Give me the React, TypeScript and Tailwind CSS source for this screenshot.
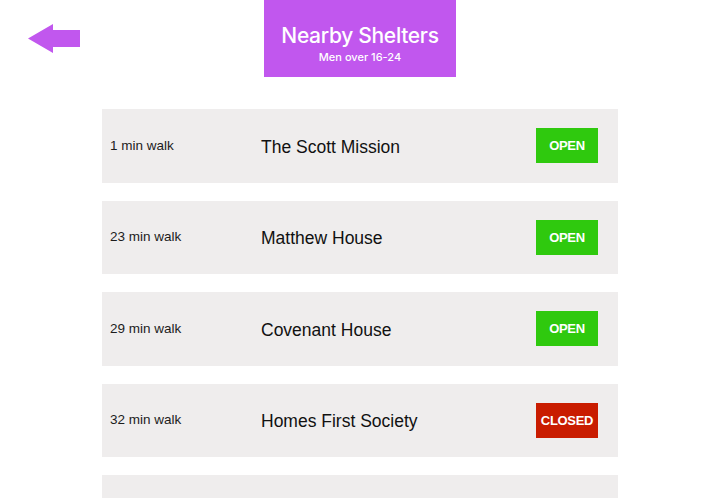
import React from 'react';

type Shelter = {
	walk: string,
	name: string,
	open: boolean,
}

const shelters: Shelter[] = [
	{walk: '1 min walk', name: 'The Scott Mission', open: true},
	{walk: '23 min walk', name: 'Matthew House', open: true},
	{walk: '29 min walk', name: 'Covenant House', open: true},
	{walk: '32 min walk', name: 'Homes First Society', open: false},
];

const BackArrow = () => (
	<svg width="52" height="30" viewBox="0 0 52 30" className="block">
		<polygon points="0,14.5 25,0 25,6 52,6 52,23 25,23 25,29" fill="#c157ee" />
	</svg>
);

const ShelterCard: React.FC<Shelter> = ({walk, name, open}) => (
	<div className="flex items-center h-[73.5px] bg-[#efeded] pl-[8px] pr-[20px]">
		<div className="w-[151px] text-[13.5px] text-[#1c1c1c]">{walk}</div>
		<div className="flex-1 text-[17.5px] text-[#111] pt-[2px]">{name}</div>
		<div
			className={
				open
					? 'w-[62px] h-[35px] flex items-center justify-center bg-[#2fc90e] text-white font-bold text-[13px] tracking-[-0.3px]'
					: 'w-[62px] h-[35px] flex items-center justify-center bg-[#c91c00] text-white font-bold text-[13px] tracking-[-0.3px]'
			}
		>
			{open ? 'OPEN' : 'CLOSED'}
		</div>
	</div>
);

export default function App() {
	return (
		<div className="w-[720px] h-[498px] overflow-hidden bg-white font-['Liberation_Sans',Arial,sans-serif]">
			<div className="grid grid-cols-[1fr_192px_1fr]">
				<div className="pl-[28px] pt-[24px]">
					<BackArrow />
				</div>
				<div className="h-[77px] bg-[#c157ee] flex flex-col items-center pt-[25px] text-white font-['Inter',sans-serif] font-medium">
					<div className="text-[21px] leading-none tracking-[-0.3px]">Nearby Shelters</div>
					<div className="text-[11px] leading-none mt-[6px]">Men over 16-24</div>
				</div>
				<div />
			</div>
			<div className="w-[516px] mx-auto mt-[32px] flex flex-col gap-[18px]">
				{shelters.map((s) => (
					<ShelterCard key={s.name} {...s} />
				))}
				<div className="h-[73.5px] bg-[#efeded]" />
			</div>
		</div>
	);
}
